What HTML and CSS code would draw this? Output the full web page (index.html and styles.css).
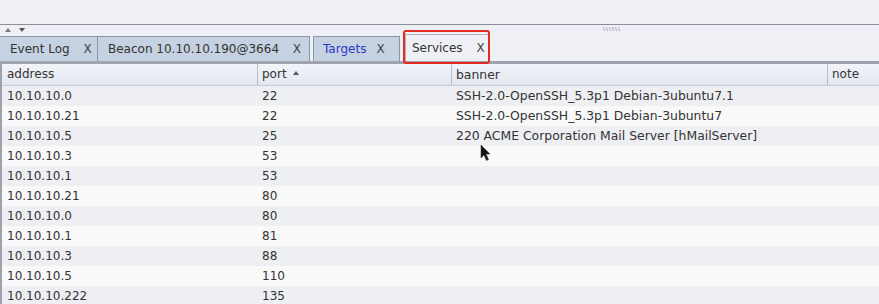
FILE: index.html
```html
<!DOCTYPE html>
<html lang="en">
<head>
    <meta charset="UTF-8">
    <meta name="viewport" content="width=device-width, initial-scale=1.0">
    <title>Services</title>
    <link rel="stylesheet" href="styles.css">
</head>
<body>
    <div class="top"></div>

    <div class="splitter">
        <span class="arrows">
            <svg width="6" height="4" viewBox="0 0 6 4"><path d="M0 4 L3 0 L6 4 Z" fill="#777"/></svg>
            <svg width="6" height="4" viewBox="0 0 6 4"><path d="M0 0 L3 4 L6 0 Z" fill="#555"/></svg>
        </span>
        <svg class="grip" width="18" height="4" viewBox="0 0 18 4">
            <path d="M0 0 L2 4 M3 0 L5 4 M6 0 L8 4 M9 0 L11 4 M12 0 L14 4 M15 0 L17 4" stroke="#aab" stroke-width="1"/>
        </svg>
    </div>

    <div class="tabs">
        <div class="tab tab-event">Event Log <span class="close">X</span></div>
        <div class="tab tab-beacon">Beacon 10.10.10.190@3664 <span class="close">X</span></div>
        <div class="tab tab-targets"><span class="blue">Targets</span> <span class="close">X</span></div>
        <div class="tab tab-services active">Services <span class="close">X</span></div>
        <div class="highlight"></div>
    </div>

    <div class="grid">
        <div class="head">
            <div class="cell c-addr">address</div>
            <div class="cell c-port">port <span class="sort"></span></div>
            <div class="cell c-banner">banner</div>
            <div class="cell c-note">note</div>
        </div>
        <div class="rows" id="rows"></div>
        <svg class="cursor" width="12" height="18" viewBox="0 0 12 18">
            <path d="M1 1 L1 14 L4 11 L6.5 16.5 L8.5 15.5 L6 10 L10 10 Z" fill="#111" stroke="#444" stroke-width="0.6"/>
        </svg>
    </div>

    <script>
        const services = [
            ['10.10.10.0', '22', 'SSH-2.0-OpenSSH_5.3p1 Debian-3ubuntu7.1'],
            ['10.10.10.21', '22', 'SSH-2.0-OpenSSH_5.3p1 Debian-3ubuntu7'],
            ['10.10.10.5', '25', '220 ACME Corporation Mail Server [hMailServer]'],
            ['10.10.10.3', '53', ''],
            ['10.10.10.1', '53', ''],
            ['10.10.10.21', '80', ''],
            ['10.10.10.0', '80', ''],
            ['10.10.10.1', '81', ''],
            ['10.10.10.3', '88', ''],
            ['10.10.10.5', '110', ''],
            ['10.10.10.222', '135', '']
        ];
        const rows = document.getElementById('rows');
        services.forEach(([addr, port, banner]) => {
            const row = document.createElement('div');
            row.className = 'row';
            row.innerHTML = `<div class="cell c-addr">${addr}</div>`
                + `<div class="cell c-port">${port}</div>`
                + `<div class="cell c-banner">${banner}</div>`
                + `<div class="cell c-note"></div>`;
            rows.appendChild(row);
        });
    </script>
</body>
</html>
```

FILE: styles.css
```css
body {
    margin: 0;
    width: 879px;
    height: 304px;
    overflow: hidden;
    background: #eef0f6;
    font-family: "DejaVu Sans", Verdana, sans-serif;
    font-size: 12px;
    color: #333;
}
.top {
    height: 24px;
    background: #eef0f6;
    border-bottom: 1px solid #8c8e98;
}
.splitter {
    height: 11px;
    display: flex;
    align-items: flex-start;
    padding-top: 3px;
    box-sizing: border-box;
    position: relative;
}
.arrows {
    display: flex;
    gap: 8px;
    margin-left: 5px;
}
.grip {
    margin-left: 578px;
    margin-top: -1px;
}
.tabs {
    height: 25px;
    display: flex;
    align-items: flex-end;
    position: relative;
    border-bottom: 3px solid #9ea3ae;
}
.tab {
    height: 25px;
    box-sizing: border-box;
    display: flex;
    align-items: center;
    padding: 0 7px 0 10px;
    background: #c6d1e1;
    border: 1px solid #8c95a6;
    border-bottom: none;
    color: #333;
    white-space: pre;
}
.tab .close {
    margin-left: 10px;
    color: #444;
}
.tab-event { width: 98px; border-left: none; }
.tab-beacon { width: 212px; border-left: none; }
.tab-targets { width: 87px; margin-left: 3px; padding-left: 9px; }
.tab-services { width: 84px; margin-left: 5px; padding-left: 6px; }
.tab .blue {
    color: #2b39c4;
}
.tab.active {
    background: #eef0f6;
    border-color: #b0b4bf;
    height: 27px;
}
.highlight {
    position: absolute;
    left: 403px;
    top: -6px;
    width: 87px;
    height: 34px;
    box-sizing: border-box;
    border: 2px solid #e32b24;
    border-radius: 3px;
}
.grid {
    position: relative;
    background: #fafafb;
    border-left: 2px solid #9da2ac;
}
.head, .row {
    display: flex;
    height: 20px;
}
.head {
    height: 21px;
    background: linear-gradient(#f2f4f9, #e2e7ef);
    border-bottom: 1px solid #c6ccd6;
}
.head .cell {
    border-right: 1px solid #b8bec9;
    line-height: 21px;
}
.head .c-note {
    border-right: none;
}
.cell {
    box-sizing: border-box;
    padding-left: 5px;
    white-space: nowrap;
    overflow: hidden;
    line-height: 20px;
}
.c-addr { width: 256px; }
.c-port { width: 194px; padding-left: 4px; }
.c-banner { width: 376px; padding-left: 4px; font-size: 12.4px; }
.c-note { flex: 1; padding-left: 4px; }
.sort {
    display: inline-block;
    width: 0;
    height: 0;
    margin-left: 3px;
    vertical-align: 3px;
    border-left: 3px solid transparent;
    border-right: 3px solid transparent;
    border-bottom: 4px solid #555;
}
.row:nth-child(odd) {
    background: #eeeff2;
}
.row:nth-child(even) {
    background: #f9f9fa;
}
.cursor {
    position: absolute;
    left: 478px;
    top: 80px;
}
```
